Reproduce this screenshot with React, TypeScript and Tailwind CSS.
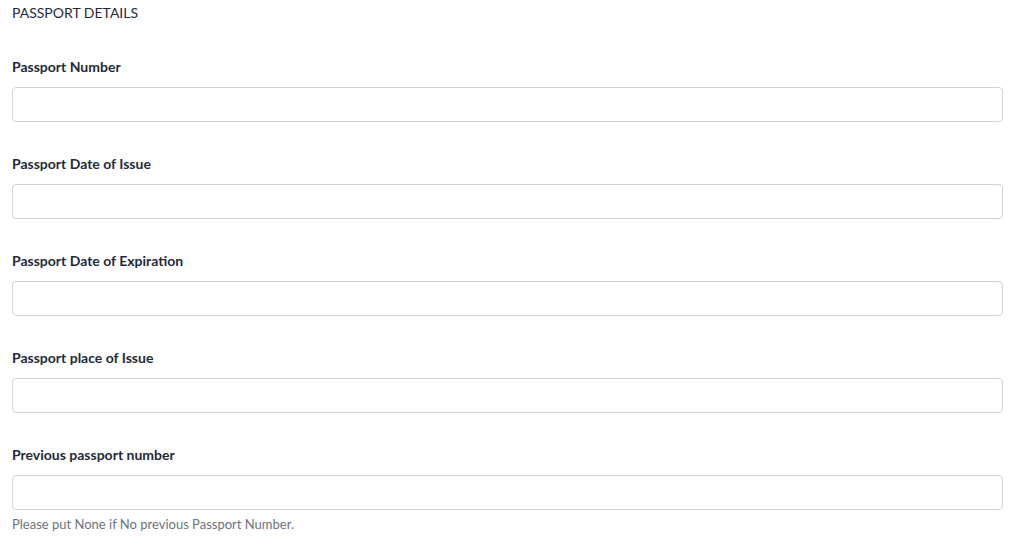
const fields = [
  { label: 'Passport Number' },
  { label: 'Passport Date of Issue' },
  { label: 'Passport Date of Expiration' },
  { label: 'Passport place of Issue' },
  { label: 'Previous passport number', help: 'Please put None if No previous Passport Number.' },
];

export default function App() {
  return (
    <div className="min-h-screen bg-white px-3 pt-[3px] font-['Lato','Liberation_Sans',sans-serif] text-[#1f2a3a]">
      <h2 className="text-[14px] leading-5 font-normal uppercase">Passport Details</h2>
      <div className="mt-[34px] flex flex-col gap-8 w-[991px]">
        {fields.map((f) => (
          <div key={f.label} className="flex flex-col">
            <label className="text-[14px] leading-5 font-bold">{f.label}</label>
            <input
              type="text"
              className="mt-[10px] h-[35px] w-full rounded-[4px] border border-[#cfd3da] bg-white px-3 text-sm outline-none"
            />
            {f.help && (
              <p className="mt-[5px] text-[13px] leading-[18px] text-[#6b7380]">{f.help}</p>
            )}
          </div>
        ))}
      </div>
    </div>
  );
}
